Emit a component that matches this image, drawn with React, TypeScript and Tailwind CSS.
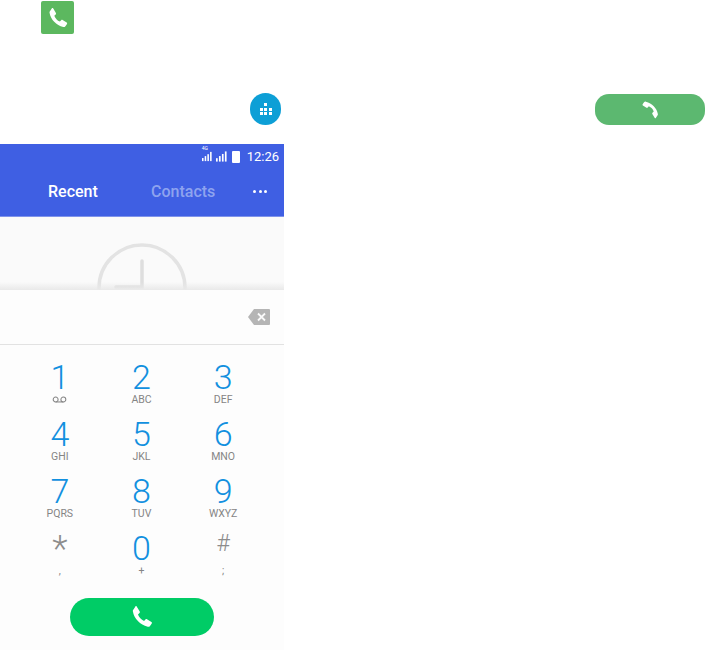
const HANDSET =
  "M7.1 2.3 L9.9 7 c.3.5.2 1-.2 1.4 L8.3 9.7 c.9 2.6 3 4.8 5.6 5.9 l1.3-1.4 c.4-.4.9-.5 1.4-.2 l4.1 2.5 c.5.3.6.9.3 1.4 l-1.6 2.3 c-.5.7-1.3 1-2.1.8 C10.2 19.2 4.8 13.7 3.6 7 c-.2-.9.1-1.7.7-2.2 L5.9 2.2 c.4-.4.9-.4 1.2.1z";

const KEYS = [
  { digit: "1", sub: "" },
  { digit: "2", sub: "ABC" },
  { digit: "3", sub: "DEF" },
  { digit: "4", sub: "GHI" },
  { digit: "5", sub: "JKL" },
  { digit: "6", sub: "MNO" },
  { digit: "7", sub: "PQRS" },
  { digit: "8", sub: "TUV" },
  { digit: "9", sub: "WXYZ" },
  { digit: "*", sub: "," },
  { digit: "0", sub: "+" },
  { digit: "#", sub: ";" },
];

function Handset({ className }: { className: string }) {
  return (
    <svg viewBox="0 0 24 24" className={className} fill="currentColor">
      <path d={HANDSET} />
    </svg>
  );
}

function Bars({ className }: { className: string }) {
  return (
    <svg viewBox="0 0 13 12" className={className} fill="#ffffff">
      <rect x="0" y="8" width="2" height="4" />
      <rect x="3.5" y="5.5" width="2" height="6.5" />
      <rect x="7" y="3" width="2" height="9" />
      <rect x="10.5" y="0" width="2" height="12" />
    </svg>
  );
}

function Key({ digit, sub }: { digit: string; sub: string }) {
  let digitClass = "text-[34px] leading-[32px] font-light text-[#1290df]";
  if (digit === "*") digitClass = "text-[36px] leading-[34px] font-light text-[#8c8c8c]";
  if (digit === "#") digitClass = "text-[23px] leading-[24px] font-light text-[#8c8c8c]";
  return (
    <div className="flex h-[57px] flex-col items-center">
      <div className={`h-[32px] ${digitClass}`}>{digit}</div>
      <div className="flex h-[13px] items-center text-[10.5px] leading-[13px] text-[#858585]">
        {digit === "1" ? (
          <svg viewBox="0 0 16 8" className="h-[7px] w-[15px]" fill="none" stroke="#858585" strokeWidth="1.2">
            <circle cx="3.6" cy="4" r="2.8" />
            <circle cx="12.4" cy="4" r="2.8" />
            <path d="M3.6 6.8h8.8" />
          </svg>
        ) : (
          sub
        )}
      </div>
    </div>
  );
}

export default function App() {
  return (
    <div className="h-[650px] w-[705px] overflow-hidden bg-white font-['Roboto',sans-serif]">
      {/* legend icons above the phone */}
      <div className="h-[144px] pt-px">
        <div className="ml-[41px] flex h-[33px] w-[33px] items-center justify-center rounded-[2px] bg-[#5cb85f] text-white">
          <Handset className="h-[24px] w-[24px]" />
        </div>
        <div className="mt-[59px] flex items-start">
          <div className="ml-[250px] flex h-[32px] w-[31px] items-center justify-center rounded-full bg-[#0d9fd6]">
            <div className="grid grid-cols-3 gap-[1.5px]">
              <span />
              <span className="h-[3px] w-[3px] bg-white" />
              <span />
              {[0, 1, 2, 3, 4, 5].map((i) => (
                <span key={i} className="h-[3px] w-[3px] bg-white" />
              ))}
            </div>
          </div>
          <div className="ml-[314px] mt-px flex h-[31px] w-[110px] items-center justify-center rounded-[14px] bg-[#5cb870] text-white">
            <Handset className="h-[21px] w-[21px] rotate-180" />
          </div>
        </div>
      </div>

      {/* phone screen */}
      <div className="flex h-[506px] w-[284px] flex-col bg-[#fafafa]">
        <div className="h-[73px] border-b border-[#7f93ea] bg-[#3f5fe3]">
          <div className="flex h-[24px] items-center justify-end pr-[5px] text-white">
            <span className="relative mr-[4px] flex items-end">
              <span className="absolute -top-[3px] left-0 text-[5px] leading-[5px] text-white">4G</span>
              <Bars className="mt-[1px] h-[13px] w-[10px]" />
            </span>
            <Bars className="mr-[5px] mt-[1px] h-[13px] w-[11px]" />
            <span className="mr-[7px] mt-[1px] h-[12px] w-[8px] rounded-[1px] bg-white" />
            <span className="text-[13px] font-normal leading-none">12:26</span>
          </div>
          <div className="flex h-[48px] items-center pb-px text-[16px] font-medium">
            <span className="ml-[48px] w-[49px] text-white">Recent</span>
            <span className="ml-[54px] text-[#8ea3ef]">Contacts</span>
            <span className="ml-[38px] flex gap-[2.5px]">
              <i className="h-[3px] w-[3px] rounded-full bg-white" />
              <i className="h-[3px] w-[3px] rounded-full bg-white" />
              <i className="h-[3px] w-[3px] rounded-full bg-white" />
            </span>
          </div>
        </div>

        {/* empty recents, cut off by the dial pad */}
        <div className="relative h-[73px] overflow-hidden">
          <svg viewBox="0 0 90 47" className="ml-[97px] mt-[26px] h-[47px] w-[90px]" fill="none" stroke="#e3e3e3" strokeWidth="3.5">
            <circle cx="45" cy="45" r="43" />
            <path d="M45 18v26H19" strokeLinecap="round" stroke="#dedede" />
          </svg>
          <div className="absolute inset-x-0 bottom-0 h-[8px] bg-gradient-to-b from-[#eeeeee00] to-[#e9e9e9]" />
        </div>

        {/* dial pad */}
        <div className="flex flex-1 flex-col bg-[#fdfdfd]">
          <div className="flex h-[55px] items-center justify-end border-b border-[#e2e2e2] pr-[14px]">
            <svg viewBox="0 0 22 16" className="h-[16px] w-[22px]">
              <path d="M6 0h15a1 1 0 0 1 1 1v14a1 1 0 0 1-1 1H6L0 8z" fill="#b5b5b5" />
              <path d="M10 4.5l7 7M17 4.5l-7 7" stroke="#fafafa" strokeWidth="1.8" />
            </svg>
          </div>
          <div className="grid grid-cols-3 pl-[19px] pr-[20px] pt-[16px]">
            {KEYS.map((k) => (
              <Key key={k.digit} digit={k.digit} sub={k.sub} />
            ))}
          </div>
          <div className="mx-auto mt-[9px] flex h-[38px] w-[144px] items-center justify-center rounded-full bg-[#00cc66] text-white">
            <Handset className="h-[26px] w-[26px]" />
          </div>
        </div>
      </div>
    </div>
  );
}
